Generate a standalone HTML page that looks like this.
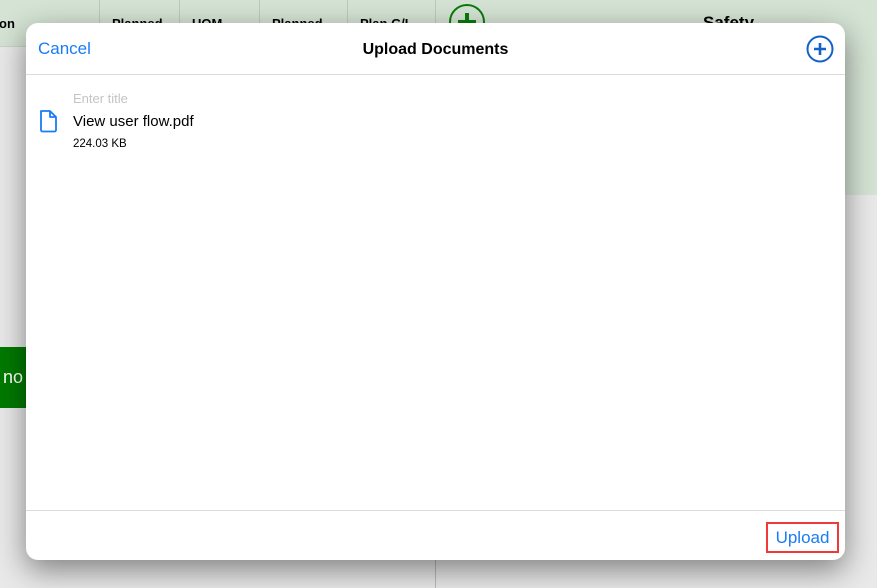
<!DOCTYPE html>
<html><head><style>
body{margin:0;width:877px;height:588px;overflow:hidden;background:#e9e9e9;font-family:"Liberation Sans",sans-serif;position:relative}
.hdr{position:absolute;left:0;top:0;width:877px;height:46px;background:#d4e3d4;border-bottom:1px solid #c8d4c8}
.gr{position:absolute;left:436px;top:0;width:441px;height:195px;background:#d4e3d4}
.col{position:absolute;top:0;height:46px;border-left:1px solid #bccabc;font-size:13px;font-weight:bold;padding:16px 0 0 12px;box-sizing:border-box}
.btn{position:absolute;left:0;top:347px;width:30px;height:61px;background:#007a00;color:#fff;font-size:18px;line-height:61px;padding-left:3px;box-sizing:border-box}
.vl{position:absolute;left:435px;top:540px;width:1px;height:48px;background:#bbb}
.modal{position:absolute;left:26px;top:23px;width:819px;height:537px;background:#fff;border-radius:12px;box-shadow:0 10px 30px rgba(0,0,0,.45);overflow:hidden}
.mh{height:51px;border-bottom:1px solid #dcdcdc;position:relative}
.cancel{position:absolute;left:12px;top:16px;color:#1a7cf5;font-size:17px}
.title{position:absolute;left:0;right:0;top:18px;text-align:center;font-size:16px;font-weight:bold}
.ft{position:absolute;left:0;right:0;top:487px;border-top:1px solid #dcdcdc}
.up{position:absolute;left:740px;top:499px;width:73px;height:31px;border:2px solid #f03a3a;box-sizing:border-box;color:#1a7cf5;font-size:17px;text-align:center;line-height:27px}
</style></head><body>
<div class="hdr"></div><div class="gr"></div>
<div class="col" style="left:-13px;border:none">on</div>
<div class="col" style="left:99px;width:80px">Planned</div>
<div class="col" style="left:179px;width:80px">UOM</div>
<div class="col" style="left:259px;width:88px">Planned</div>
<div class="col" style="left:347px;width:88px">Plan G/L</div>
<div class="col" style="left:435px;width:300px"></div>
<svg style="position:absolute;left:448px;top:3px" width="40" height="40"><circle cx="19" cy="19" r="17" fill="none" stroke="#0a7a0a" stroke-width="2"/><path d="M19 10v18M10 19h18" stroke="#0a7a0a" stroke-width="4"/></svg>
<div style="position:absolute;left:703px;top:13px;font-size:17px;font-weight:bold">Safety</div>
<div class="btn">no</div>
<div class="vl"></div>
<div class="modal">
<div class="mh"><div class="cancel">Cancel</div><div class="title">Upload Documents</div>
<svg style="position:absolute;left:779px;top:12px" width="30" height="30"><circle cx="15" cy="14" r="12.5" fill="none" stroke="#1262c8" stroke-width="2"/><path d="M15 8v12M9 14h12" stroke="#1262c8" stroke-width="2.6"/></svg></div>
<div style="position:absolute;left:47px;top:68px;font-size:13px;color:#c4c4c4;line-height:15px">Enter title</div>
<svg style="position:absolute;left:13px;top:86px" width="20" height="24"><path d="M2 2h9l6 6v13a1.5 1.5 0 0 1-1.5 1.5h-12A1.5 1.5 0 0 1 2 21z M11 2v6h6" fill="none" stroke="#1a7cf5" stroke-width="1.8" stroke-linejoin="round"/></svg>
<div style="position:absolute;left:47px;top:90px;font-size:15px;line-height:17px">View user flow.pdf</div>
<div style="position:absolute;left:47px;top:115px;font-size:11.5px;line-height:13px">224.03 KB</div>
<div class="ft"></div>
<div class="up">Upload</div>
</div>
</body></html>
